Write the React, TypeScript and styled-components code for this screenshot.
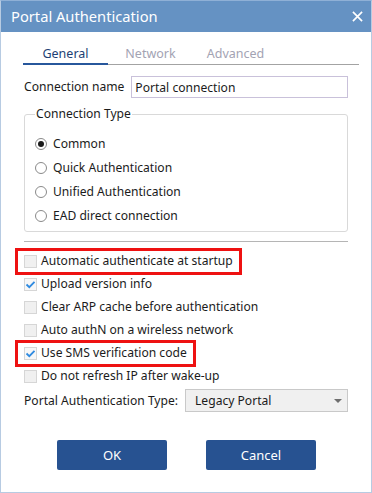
import styled, { createGlobalStyle } from 'styled-components';

const GlobalStyle = createGlobalStyle`
  html, body {
    margin: 0;
    padding: 0;
    background: #ffffff;
  }
  * {
    box-sizing: border-box;
  }
`;

type Option = { label: string; checked?: boolean; highlight?: boolean };

const connectionTypes: Option[] = [
  { label: 'Common', checked: true },
  { label: 'Quick Authentication' },
  { label: 'Unified Authentication' },
  { label: 'EAD direct connection' },
];

const options: Option[] = [
  { label: 'Automatic authenticate at startup', highlight: true },
  { label: 'Upload version info', checked: true },
  { label: 'Clear ARP cache before authentication' },
  { label: 'Auto authN on a wireless network' },
  { label: 'Use SMS verification code', checked: true, highlight: true },
  { label: 'Do not refresh IP after wake-up' },
];

const tabs = ['General', 'Network', 'Advanced'];

export default function App() {
  return (
    <>
      <GlobalStyle />
      <Window>
        <TitleBar>
          <Title>Portal Authentication</Title>
          <CloseIcon viewBox="0 0 12 12">
            <path d="M1 1 L11 11 M11 1 L1 11" stroke="#fff" strokeWidth="1.8" />
          </CloseIcon>
        </TitleBar>

        <Body>
          <TabBar>
            {tabs.map((t, i) => (
              <Tab key={t} $active={i === 0}>
                {t}
              </Tab>
            ))}
          </TabBar>

          <NameRow>
            <Label>Connection name</Label>
            <TextInput defaultValue="Portal connection" />
          </NameRow>

          <Group>
            <Legend>Connection Type</Legend>
            {connectionTypes.map((o) => (
              <RadioRow key={o.label}>
                <RadioCircle $checked={o.checked} />
                <Label>{o.label}</Label>
              </RadioRow>
            ))}
          </Group>

          <Separator />

          <CheckList>
            {options.map((o) => (
              <CheckRow key={o.label}>
                <CheckBox $checked={o.checked}>
                  {o.checked && (
                    <svg viewBox="0 0 13 13" width="13" height="13">
                      <path
                        d="M2.5 6.5 L5.3 9.2 L10.5 3.8"
                        fill="none"
                        stroke="#2f8ae0"
                        strokeWidth="1.8"
                      />
                    </svg>
                  )}
                </CheckBox>
                <Label>{o.label}</Label>
                {o.highlight && <Highlight />}
              </CheckRow>
            ))}
          </CheckList>

          <TypeRow>
            <Label>Portal Authentication Type:</Label>
            <Select>
              <span>Legacy Portal</span>
              <Arrow />
            </Select>
          </TypeRow>

          <Buttons>
            <Button>OK</Button>
            <Button>Cancel</Button>
          </Buttons>
        </Body>
      </Window>
    </>
  );
}

// ============================
//  Styled Components
// ============================

const Window = styled.div`
  width: 372px;
  height: 493px;
  border: 1px solid #b7cbe2;
  border-top-color: #8fb0d6;
  background: #ffffff;
  display: flex;
  flex-direction: column;
  font-family: 'Noto Sans', 'Open Sans', sans-serif;
  font-size: 12.1px;
  color: #1b1b1b;
`;

const TitleBar = styled.div`
  height: 31px;
  background: #6592c3;
  display: flex;
  align-items: center;
  justify-content: space-between;
  padding: 0 8px 0 10px;
`;

const Title = styled.span`
  color: #ffffff;
  font-size: 14.7px;
  line-height: 31px;
`;

const CloseIcon = styled.svg`
  width: 11px;
  height: 11px;
`;

const Body = styled.div`
  flex: 1;
  padding: 0 23px 0 22px;
  display: flex;
  flex-direction: column;
`;

const TabBar = styled.div`
  display: flex;
  margin: 13px -11px 0 0;
  border-bottom: 1px solid #a3a3a3;
  height: 20px;
`;

const Tab = styled.div<{ $active?: boolean }>`
  width: 85px;
  text-align: center;
  line-height: 17px;
  font-size: 12.5px;
  color: ${({ $active }) => ($active ? '#1e3f74' : '#a3a3b3')};
  border-bottom: 2px solid ${({ $active }) => ($active ? '#27579c' : 'transparent')};
  margin-bottom: -1px;
`;

const Label = styled.span`
  white-space: nowrap;
  line-height: 18px;
`;

const NameRow = styled.div`
  display: flex;
  align-items: center;
  gap: 7px;
  margin-top: 11px;
  padding-left: 1px;
`;

const TextInput = styled.input`
  flex: 1;
  height: 22px;
  border: 1px solid #c9c1da;
  font: inherit;
  color: inherit;
  padding: 0 3px;
  outline: none;
`;

const Group = styled.fieldset`
  margin: 7px 0 0 1px;
  padding: 12px 0 6px 10px;
  border: 1px solid #d9d9d9;
  border-radius: 3px;
  display: flex;
  flex-direction: column;
  gap: 6px;
`;

const Legend = styled.legend`
  padding: 0 1px;
  margin-left: 0;
  line-height: 18px;
`;

const RadioRow = styled.div`
  display: flex;
  align-items: center;
  gap: 6px;
  height: 18px;
`;

const RadioCircle = styled.span<{ $checked?: boolean }>`
  width: 12px;
  height: 12px;
  border: 1px solid #8a8a8a;
  border-radius: 50%;
  background: #ffffff;
  display: flex;
  align-items: center;
  justify-content: center;
  &::after {
    content: '';
    width: 6px;
    height: 6px;
    border-radius: 50%;
    background: ${({ $checked }) => ($checked ? '#1b1b1b' : 'transparent')};
  }
`;

const Separator = styled.div`
  height: 1px;
  background: #b5b5b5;
  margin: 9px 0 0 1px;
`;

const CheckList = styled.div`
  display: flex;
  flex-direction: column;
  gap: 5px;
  margin-top: 10px;
  padding-left: 1px;
`;

const CheckRow = styled.div`
  position: relative;
  display: flex;
  align-items: center;
  gap: 4px;
  height: 18px;
  align-self: flex-start;
`;

const CheckBox = styled.span<{ $checked?: boolean }>`
  width: 13px;
  height: 13px;
  border: 1px solid #d6d6d6;
  background: ${({ $checked }) => ($checked ? '#f7f7f7' : '#f0f0f0')};
  display: flex;
  align-items: center;
  justify-content: center;
  svg {
    flex: none;
  }
`;

const Highlight = styled.span`
  position: absolute;
  left: -9px;
  right: -9px;
  top: -4px;
  bottom: -5px;
  border: 3px solid #ee1111;
  pointer-events: none;
`;

const TypeRow = styled.div`
  display: flex;
  align-items: center;
  gap: 7px;
  margin-top: 4px;
  padding-left: 1px;
`;

const Select = styled.div`
  flex: 1;
  height: 23px;
  border: 1px solid #c9c9c9;
  background: #f0f0f0;
  display: flex;
  align-items: center;
  justify-content: space-between;
  padding: 0 5px 0 9px;
`;

const Arrow = styled.span`
  width: 0;
  height: 0;
  border-left: 4px solid transparent;
  border-right: 4px solid transparent;
  border-top: 4px solid #6e6e6e;
`;

const Buttons = styled.div`
  display: flex;
  gap: 39px;
  margin-top: 28px;
  padding-left: 34px;
`;

const Button = styled.button`
  width: 110px;
  height: 30px;
  border: none;
  border-radius: 2px;
  background: #275291;
  color: #ffffff;
  font: inherit;
  font-size: 13px;
  cursor: pointer;
`;
